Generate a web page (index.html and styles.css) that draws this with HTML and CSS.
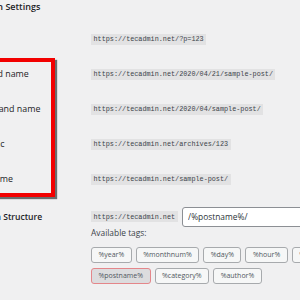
FILE: index.html
```html
<!DOCTYPE html>
<html lang="en">
<head>
  <meta charset="UTF-8" />
  <title>Permalink Settings</title>
  <link rel="stylesheet" href="styles.css">
</head>
<body>

<div class="wrap">
  <h2 class="section-title">Common Settings</h2>

  <div class="form-table">
    <div class="row">
      <div class="label">Plain</div>
      <div class="value"><code>https://tecadmin.net/?p=123</code></div>
    </div>
    <div class="row">
      <div class="label">Day and name</div>
      <div class="value"><code>https://tecadmin.net/2020/04/21/sample-post/</code></div>
    </div>
    <div class="row">
      <div class="label">Month and name</div>
      <div class="value"><code>https://tecadmin.net/2020/04/sample-post/</code></div>
    </div>
    <div class="row">
      <div class="label">Numeric</div>
      <div class="value"><code>https://tecadmin.net/archives/123</code></div>
    </div>
    <div class="row">
      <div class="label">Post name</div>
      <div class="value"><code>https://tecadmin.net/sample-post/</code></div>
    </div>
    <div class="row custom">
      <div class="label strong">Custom Structure</div>
      <div class="value">
        <div class="structure">
          <code>https://tecadmin.net</code>
          <input class="structure-input" type="text" value="/%postname%/">
        </div>
        <div class="tags-title">Available tags:</div>
        <div class="tags">
          <button class="tag">%year%</button>
          <button class="tag">%monthnum%</button>
          <button class="tag">%day%</button>
          <button class="tag">%hour%</button>
          <button class="tag">%minute%</button>
          <button class="tag active">%postname%</button>
          <button class="tag">%category%</button>
          <button class="tag">%author%</button>
        </div>
      </div>
    </div>
  </div>

  <!-- annotation over the option labels -->
  <div class="highlight"></div>
</div>

</body>
</html>
```

FILE: styles.css
```css
body {
  margin: 0;
  background: #f0f0f1;
  color: #1d2327;
  font-family: "Open Sans", "Noto Sans", sans-serif;
  overflow: hidden;
}

.wrap {
  position: relative;
  margin-left: -31px;
  width: 400px;
}

.section-title {
  margin: 0 0 0 -5.5px;
  height: 21.5px;
  font-size: 9px;
  font-weight: 600;
  line-height: 14px;
  color: #1d2327;
}

.form-table {
  display: flex;
  flex-direction: column;
}

.row {
  display: flex;
  align-items: center;
  height: 35px;
}

.label {
  width: 122px;
  flex-shrink: 0;
  font-size: 8.9px;
  line-height: 12px;
}

.label.strong {
  font-weight: 600;
  font-size: 8.6px;
}

.value {
  display: flex;
  flex-direction: column;
  align-items: flex-start;
}

code {
  display: block;
  padding: 0.5px 2.5px;
  background: #e2e2e3;
  color: #3c434a;
  font-family: "Liberation Mono", monospace;
  font-size: 6.8px;
  line-height: 10px;
}

.row.custom {
  height: auto;
  align-items: flex-start;
  padding-top: 10px;
}

.row.custom .label {
  line-height: 20px;
}

.structure {
  display: flex;
  align-items: center;
  gap: 4.5px;
  height: 20px;
}

.structure-input {
  width: 160px;
  height: 20px;
  box-sizing: border-box;
  margin: 0;
  padding: 0 5px;
  border: 1px solid #8c8f94;
  border-radius: 3px;
  background: #fff;
  color: #2c3338;
  font-family: "Open Sans", "Noto Sans", sans-serif;
  font-size: 8.4px;
}

.tags-title {
  font-size: 8.4px;
  line-height: 11px;
  color: #3c434a;
}

.tags {
  display: flex;
  flex-wrap: wrap;
  gap: 4.5px 4px;
  width: 262px;
  margin-top: 9px;
}

.tag {
  height: 16.5px;
  margin: 0;
  padding: 0 6.5px;
  border: 1px solid #a7aaad;
  border-radius: 3px;
  background: #f6f7f7;
  color: #50575e;
  font-family: "Open Sans", "Noto Sans", sans-serif;
  font-size: 7px;
  line-height: 14px;
}

.tag.active {
  background: #dcdcde;
  border-color: #e4868a;
}

.highlight {
  position: absolute;
  left: 0;
  top: 58px;
  width: 78px;
  height: 131px;
  border: 4px solid #f20000;
  box-shadow: 2px 2px 1px rgba(0, 0, 0, 0.55);
}
```
